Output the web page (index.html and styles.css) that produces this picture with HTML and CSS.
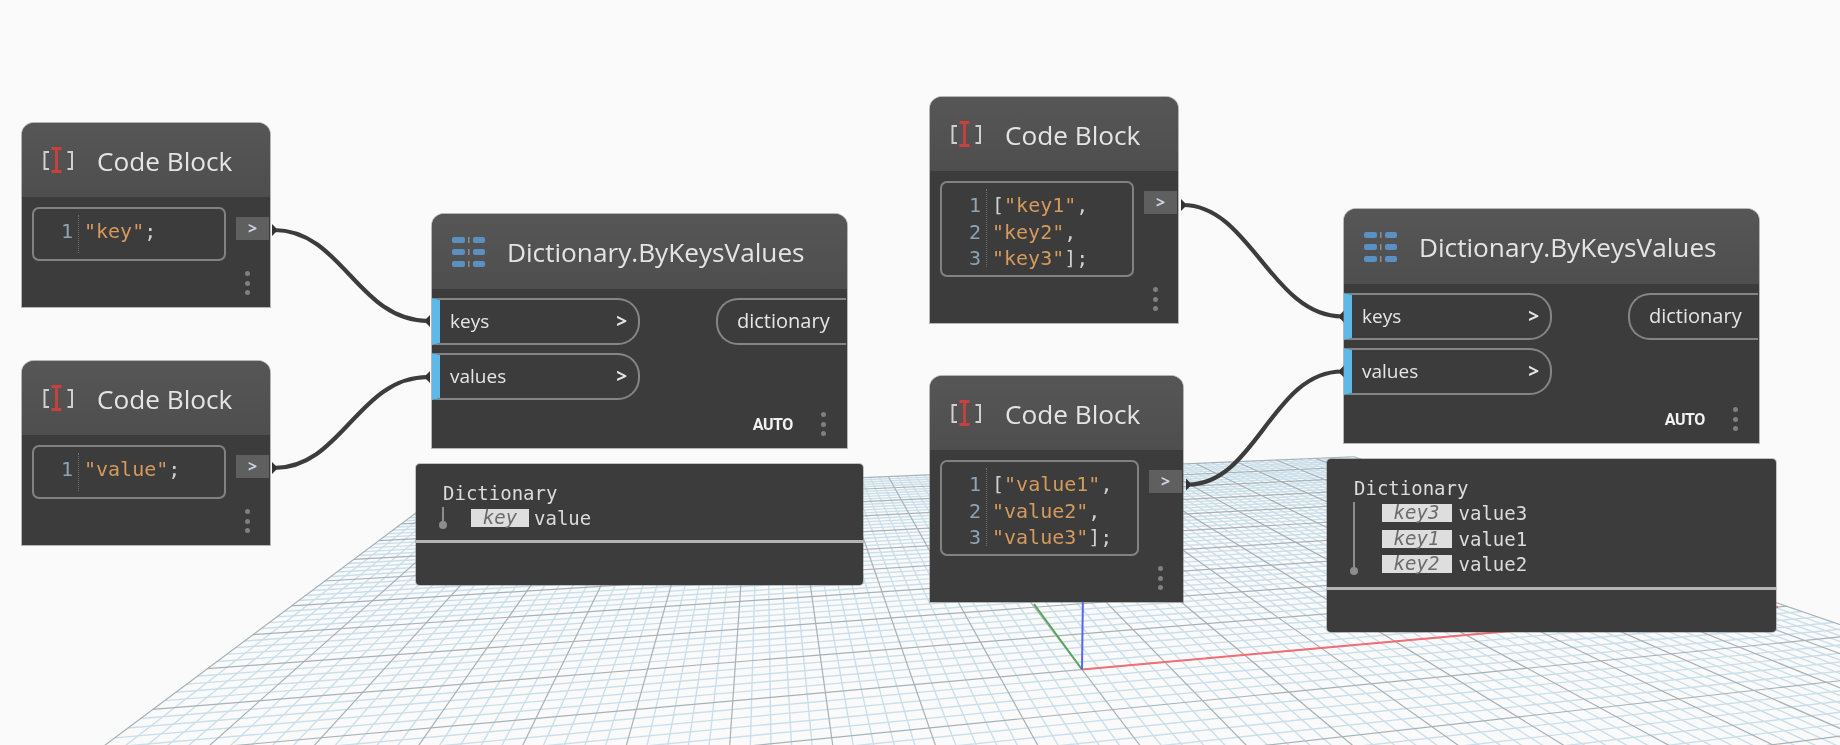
FILE: index.html
```html
<!DOCTYPE html>
<html lang="en">
<head>
<meta charset="utf-8">
<title>Dictionary.ByKeysValues</title>
<link rel="stylesheet" href="styles.css">
</head>
<body>
<main class="stage">
  <svg class="ground" width="1840" height="745" viewBox="0 0 1840 745">
    <g id="grid-minor" class="grid-minor"></g>
    <g id="grid-major" class="grid-major"></g>
    <path class="axis axis-x" d="M1082 669.5L1778 607"/>
    <path class="axis axis-y" d="M1082 669.5L1034 604"/>
    <path class="axis axis-z" d="M1082 669.5L1083 590"/>
  </svg>

  <svg class="wires" width="1840" height="745" viewBox="0 0 1840 745">
    <defs>
      <symbol id="cb-icon" viewBox="0 0 31 26">
        <path class="cb-bracket" d="M6 5H1.500V22H6M24.500 5H29V22H24.500"/>
        <path class="cb-cursor" d="M8.500 1.500H18.500M13.500 1.500V24.500M8.500 24.500H18.500"/>
      </symbol>
      <symbol id="dict-icon" viewBox="0 0 33 30">
        <g class="dict-bars">
          <rect x="0" y="0" width="13" height="6" rx="2"/>
          <rect x="21" y="0" width="12" height="6" rx="2"/>
          <rect x="0" y="12" width="13" height="6" rx="2"/>
          <rect x="21" y="12" width="12" height="6" rx="2"/>
          <rect x="0" y="24" width="13" height="6" rx="2"/>
          <rect x="21" y="24" width="12" height="6" rx="2"/>
        </g>
        <g class="dict-ticks">
          <rect x="16" y="0" width="1.500" height="6"/>
          <rect x="16" y="12" width="1.500" height="6"/>
          <rect x="16" y="24" width="1.500" height="6"/>
        </g>
      </symbol>
    </defs>
    <path class="wire" d="M274 230C342 230 358 321 428 321"/>
    <path class="wire" d="M274 468C342 468 358 377 428 377"/>
    <path class="wire" d="M1183 205C1250 205 1272 316.500 1342 316.500"/>
    <path class="wire" d="M1188 484.500C1256 484.500 1272 371.500 1342 371.500"/>
    <path class="wire-end" d="M272 224L276 228V232L272 236Z"/>
    <path class="wire-end" d="M272 462L276 466V470L272 474Z"/>
    <path class="wire-end" d="M430 315L426 319V323L430 327Z"/>
    <path class="wire-end" d="M430 371L426 375V379L430 383Z"/>
    <path class="wire-end" d="M1181 199L1185 203V207L1181 211Z"/>
    <path class="wire-end" d="M1186 478.500L1190 482.500V486.500L1186 490.500Z"/>
    <path class="wire-end" d="M1344 310.500L1340 314.500V318.500L1344 322.500Z"/>
    <path class="wire-end" d="M1344 365.500L1340 369.500V373.500L1344 377.500Z"/>
  </svg>

  <section class="node node-a">
    <header class="node-head"><svg class="cb-svg"><use href="#cb-icon"/></svg><h2 class="node-title">Code Block</h2></header>
    <div class="node-row">
      <div class="code-box code-box-single">
        <div class="gutter"><span>1</span></div>
        <div class="code"><span class="str">"key"</span>;</div>
      </div>
      <div class="out-port">&gt;</div>
    </div>
    <div class="node-foot"><div class="dots"><i></i><i></i><i></i></div></div>
  </section>

  <section class="node node-b">
    <header class="node-head"><svg class="cb-svg"><use href="#cb-icon"/></svg><h2 class="node-title">Code Block</h2></header>
    <div class="node-row">
      <div class="code-box code-box-single">
        <div class="gutter"><span>1</span></div>
        <div class="code"><span class="str">"value"</span>;</div>
      </div>
      <div class="out-port">&gt;</div>
    </div>
    <div class="node-foot"><div class="dots"><i></i><i></i><i></i></div></div>
  </section>

  <section class="node dict dict-a">
    <header class="node-head"><svg class="dict-svg"><use href="#dict-icon"/></svg><h2 class="node-title">Dictionary.ByKeysValues</h2></header>
    <div class="dict-ports">
      <div class="inputs">
        <div class="in-port"><span>keys</span><b>&gt;</b></div>
        <div class="in-port"><span>values</span><b>&gt;</b></div>
      </div>
      <div class="result-port">dictionary</div>
    </div>
    <div class="dict-foot"><span class="lacing">AUTO</span><div class="dots"><i></i><i></i><i></i></div></div>
  </section>

  <section class="preview preview-a">
    <div class="preview-title">Dictionary</div>
    <div class="tree">
      <div class="rail"></div>
      <ul class="entries">
        <li class="entry"><span class="tag">key</span>value</li>
      </ul>
    </div>
    <div class="preview-rule"></div>
  </section>

  <section class="node node-c">
    <header class="node-head"><svg class="cb-svg"><use href="#cb-icon"/></svg><h2 class="node-title">Code Block</h2></header>
    <div class="node-row">
      <div class="code-box">
        <div class="gutter"><span>1</span><span>2</span><span>3</span></div>
        <div class="code">
          <div>[<span class="str">"key1"</span>,</div>
          <div><span class="str">"key2"</span>,</div>
          <div><span class="str">"key3"</span>];</div>
        </div>
      </div>
      <div class="out-port">&gt;</div>
    </div>
    <div class="node-foot"><div class="dots"><i></i><i></i><i></i></div></div>
  </section>

  <section class="node node-d">
    <header class="node-head"><svg class="cb-svg"><use href="#cb-icon"/></svg><h2 class="node-title">Code Block</h2></header>
    <div class="node-row">
      <div class="code-box code-box-wide">
        <div class="gutter"><span>1</span><span>2</span><span>3</span></div>
        <div class="code">
          <div>[<span class="str">"value1"</span>,</div>
          <div><span class="str">"value2"</span>,</div>
          <div><span class="str">"value3"</span>];</div>
        </div>
      </div>
      <div class="out-port">&gt;</div>
    </div>
    <div class="node-foot"><div class="dots"><i></i><i></i><i></i></div></div>
  </section>

  <section class="node dict dict-b">
    <header class="node-head"><svg class="dict-svg"><use href="#dict-icon"/></svg><h2 class="node-title">Dictionary.ByKeysValues</h2></header>
    <div class="dict-ports">
      <div class="inputs">
        <div class="in-port"><span>keys</span><b>&gt;</b></div>
        <div class="in-port"><span>values</span><b>&gt;</b></div>
      </div>
      <div class="result-port">dictionary</div>
    </div>
    <div class="dict-foot"><span class="lacing">AUTO</span><div class="dots"><i></i><i></i><i></i></div></div>
  </section>

  <section class="preview preview-b">
    <div class="preview-title">Dictionary</div>
    <div class="tree">
      <div class="rail"></div>
      <ul class="entries">
        <li class="entry"><span class="tag">key3</span>value3</li>
        <li class="entry"><span class="tag">key1</span>value1</li>
        <li class="entry"><span class="tag">key2</span>value2</li>
      </ul>
    </div>
    <div class="preview-rule"></div>
  </section>
</main>
<script src="grid.js"></script>
</body>
</html>
```
FILE: styles.css
```css
* { box-sizing: border-box; }

html, body {
  margin: 0;
  padding: 0;
  background: #fafafa;
  overflow: hidden;
}

.stage {
  position: relative;
  width: 1840px;
  height: 745px;
  background: #fafafa;
  overflow: hidden;
  font-family: "Open Sans", "Noto Sans", sans-serif;
}

.ground, .wires {
  position: absolute;
  left: 0;
  top: 0;
}

.ground { filter: blur(0.35px); }

.grid-minor line { stroke: #cbdfea; stroke-width: 1.4; }
.grid-major line { stroke: #a6b1b8; stroke-width: 1.2; }

.axis { fill: none; stroke-width: 2; }
.axis-x { stroke: #f26d75; }
.axis-y { stroke: #58a65c; }
.axis-z { stroke: #5c63f0; }

.wire { fill: none; stroke: #3c3c3c; stroke-width: 4.2; }
.wire-end { fill: #333; }

.cb-bracket { fill: none; stroke: #cfcfcf; stroke-width: 2; }
.cb-cursor { fill: none; stroke: #c8403f; stroke-width: 2.8; }
.dict-bars rect { fill: #5b91c2; }
.dict-ticks rect { fill: #8a8f93; }

/* nodes sit on a free canvas */
.node {
  position: absolute;
  background: #3c3c3c;
  color: #e6e6e6;
  border-radius: 12px 12px 0 0;
  box-shadow: 0 0 0 1px rgba(125, 125, 125, 0.55);
  filter: blur(0.3px);
}
.node-a { left: 22px; top: 123px; }
.node-b { left: 22px; top: 361px; }
.node-c { left: 930px; top: 97px; }
.node-d { left: 930px; top: 376px; }
.dict { width: 415px; }
.dict-a { left: 432px; top: 214px; }
.dict-b { left: 1344px; top: 209px; }

.node-head {
  display: flex;
  align-items: center;
  height: 74px;
  padding-left: 21px;
  background: linear-gradient(#565656, #4e4e4e);
  border-radius: 12px 12px 0 0;
}
.dict .node-head { height: 75px; padding-left: 20px; }

.cb-svg { width: 31px; height: 26px; flex: none; margin-right: 23px; }
.dict-svg { width: 33px; height: 30px; flex: none; margin-right: 22px; }

.node-title {
  margin: 2px 0 0;
  font-size: 26.200px;
  font-weight: 400;
  color: #e4e4e4;
  white-space: nowrap;
  line-height: 1;
}

.node-row {
  display: flex;
  align-items: flex-start;
  gap: 10px;
  padding: 10px 1px 0 10px;
}

.code-box {
  display: flex;
  width: 194px;
  height: 96px;
  padding: 6px 0 8px;
  border: 2px solid #828282;
  border-radius: 7px;
  font-family: "DejaVu Sans Mono", "Liberation Mono", monospace;
  font-size: 20px;
  line-height: 26.500px;
  color: #cfcfcf;
}
.code-box-wide { width: 199px; }
.code-box-single { height: 54px; padding: 6px 0; }

.gutter {
  display: flex;
  flex-direction: column;
  align-items: flex-end;
  width: 45px;
  padding: 3px 5px 0 0;
  border-right: 1px dotted #6f6f6f;
  color: #8ea4b5;
}
.code { padding: 3px 0 0 5px; white-space: nowrap; }
.str { color: #d59a5c; }

.out-port {
  flex: none;
  width: 33px;
  height: 23px;
  margin-top: 10px;
  background: #5f5f5f;
  color: #cdd5e4;
  font-size: 16px;
  font-weight: 700;
  line-height: 22px;
  text-align: center;
}

.node-foot {
  display: flex;
  justify-content: flex-end;
  padding: 10px 20px 12px 0;
}

.dots {
  display: flex;
  flex-direction: column;
  justify-content: space-between;
  width: 5px;
  height: 24px;
}
.dots i {
  display: block;
  width: 5px;
  height: 5px;
  border-radius: 50%;
  background: #808080;
}

.dict-ports {
  display: flex;
  justify-content: space-between;
  align-items: flex-start;
  padding: 9px 1px 0 0;
}
.inputs {
  display: flex;
  flex-direction: column;
  gap: 8px;
}
.in-port {
  display: flex;
  align-items: center;
  justify-content: space-between;
  width: 208px;
  height: 47px;
  padding: 0 11px 2px 10px;
  border: 2px solid #858585;
  border-left: 8px solid #5fb9e8;
  border-radius: 0 22px 22px 0;
  font-size: 19px;
  color: #e6e6e6;
}
.in-port b { font-size: 19px; font-weight: 700; }

.result-port {
  width: 130px;
  height: 47px;
  padding: 0 0 2px 19px;
  border: 2px solid #858585;
  border-right: 0;
  border-radius: 22px 0 0 22px;
  font-size: 20px;
  line-height: 41px;
  color: #e6e6e6;
}

.dict-foot {
  display: flex;
  justify-content: flex-end;
  align-items: center;
  padding: 12px 21px 12px 0;
}
.lacing {
  margin-right: 28px;
  font-family: "Roboto", sans-serif;
  font-size: 16px;
  font-weight: 700;
  letter-spacing: -0.4px;
  color: #f2f2f2;
}

.preview {
  position: absolute;
  padding-top: 17px;
  padding-bottom: 42px;
  background: #3c3c3c;
  border-radius: 4px;
  box-shadow: 0 0 0 1px rgba(110, 110, 110, 0.4);
  font-family: "DejaVu Sans Mono", "Liberation Mono", monospace;
  font-size: 19px;
  color: #dcdcdc;
  filter: blur(0.3px);
}
.preview-a { left: 416px; top: 464px; width: 447px; }
.preview-b { left: 1327px; top: 459px; width: 449px; }

.preview-title {
  padding-left: 27px;
  line-height: 24px;
  margin-bottom: 4px;
}

.tree {
  display: flex;
  padding-left: 26px;
  margin-bottom: 13px;
}
.preview-b .tree { margin-bottom: 14px; }
.rail {
  position: relative;
  flex: none;
  width: 1.500px;
  margin: -2px 0 1px;
  background: #8d8d8d;
}
.rail::after {
  content: "";
  position: absolute;
  left: -3.250px;
  bottom: -3px;
  width: 8px;
  height: 8px;
  border-radius: 50%;
  background: #8d8d8d;
}

.entries {
  margin: 0;
  padding: 0 0 0 27.500px;
  list-style: none;
}
.preview-b .entries { padding-left: 27px; }

.entry {
  display: flex;
  align-items: center;
  height: 18px;
  margin-bottom: 7.500px;
  line-height: 18px;
}
.entry:last-child { margin-bottom: 0; }

.tag {
  flex: none;
  width: 58px;
  height: 18px;
  margin-right: 5px;
  background: #dedede;
  color: #6b6b6b;
  font-style: italic;
  line-height: 16px;
  text-align: center;
}
.preview-b .tag { width: 70px; margin-right: 7px; }

.preview-rule {
  height: 3px;
  background: #b4b4b4;
}
```
FILE: grid.js
```js
// Perspective ground grid: a homography built from two vanishing points and the origin.
(function () {
  var NS = "http://www.w3.org/2000/svg";
  var VX = [5342, 287], VY = [764, 253], O = [1082, 669.5];
  var AU_NEG = 0.01894, AU_POS = 0.01982, BV = 0.0879, DIV = 5, MIN_W = 0.06;

  function project(au, bv) {
    var w = 1 + au + bv;
    return [(au * VX[0] + bv * VY[0] + O[0]) / w, (au * VX[1] + bv * VY[1] + O[1]) / w];
  }
  function auOf(i) { return i * (i < 0 ? AU_NEG : AU_POS); }

  function add(group, a, b) {
    var l = document.createElementNS(NS, "line");
    l.setAttribute("x1", a[0].toFixed(2));
    l.setAttribute("y1", a[1].toFixed(2));
    l.setAttribute("x2", b[0].toFixed(2));
    l.setAttribute("y2", b[1].toFixed(2));
    group.appendChild(l);
  }

  var minor = document.getElementById("grid-minor");
  var major = document.getElementById("grid-major");
  var auMin = auOf(-10), auMax = auOf(10), bvMin = BV * -10, bvMax = BV * 10;

  for (var n = -50; n <= 50; n++) {
    var g = n % DIV === 0 ? major : minor;
    var au = auOf(n / DIV);
    var bStart = Math.max(bvMin, MIN_W - 1 - au);
    add(g, project(au, bStart), project(au, bvMax));

    var bv = BV * n / DIV;
    var aStart = Math.max(auMin, MIN_W - 1 - bv);
    if (aStart < auMax) add(g, project(aStart, bv), project(auMax, bv));
  }
})();
```
